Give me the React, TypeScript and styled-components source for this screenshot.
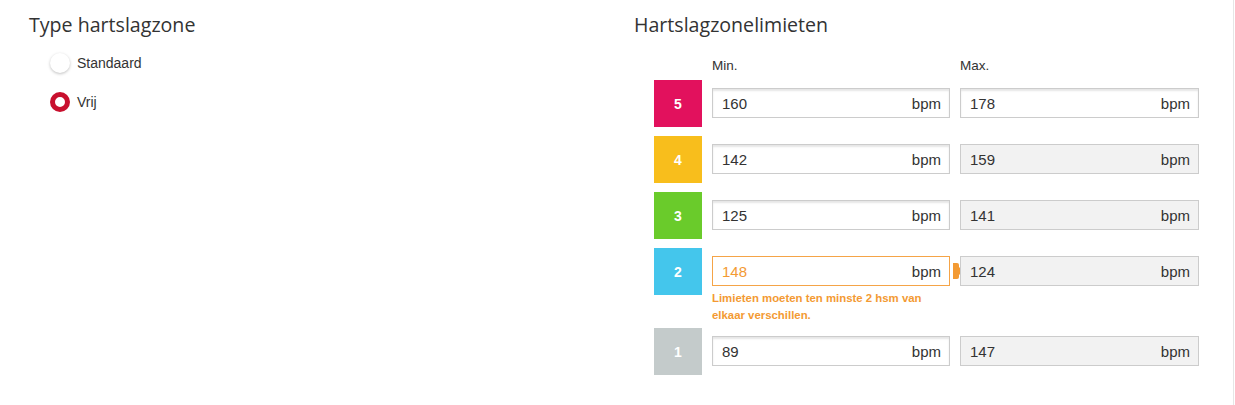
import styled, { createGlobalStyle } from "styled-components";

type Zone = {
    level: number;
    color: string;
    min: number;
    max: number;
    maxEditable?: boolean;
    error?: string;
}

const zones: Array<Zone> = [
    { level: 5, color: "#e2115d", min: 160, max: 178, maxEditable: true },
    { level: 4, color: "#f8be1c", min: 142, max: 159 },
    { level: 3, color: "#6acb2b", min: 125, max: 141 },
    { level: 2, color: "#44c6ec", min: 148, max: 124, error: "Limieten moeten ten minste 2 hsm van elkaar verschillen." },
    { level: 1, color: "#c4cbcb", min: 89, max: 147 },
]

const GlobalStyle = createGlobalStyle`
    body {
        margin: 0;
        background: #ffffff;
        font-family: Arial, "Liberation Sans", sans-serif;
        color: #333333;
    }
`

const App = () => {
    return (
        <Page>
            <GlobalStyle />
            <TypeSection>
                <SectionTitle>Type hartslagzone</SectionTitle>
                <RadioList>
                    <RadioRow>
                        <RadioCircle />
                        <RadioLabel>Standaard</RadioLabel>
                    </RadioRow>
                    <RadioRow>
                        <RadioCircle checked />
                        <RadioLabel>Vrij</RadioLabel>
                    </RadioRow>
                </RadioList>
            </TypeSection>
            <LimitsSection>
                <SectionTitle>Hartslagzonelimieten</SectionTitle>
                <ZoneTable>
                    <HeaderRow>
                        <span />
                        <ColumnLabel>Min.</ColumnLabel>
                        <ColumnLabel>Max.</ColumnLabel>
                    </HeaderRow>
                    {zones.map((zone) => (
                        <ZoneRow key={zone.level}>
                            <ZoneBadge color={zone.color}>{zone.level}</ZoneBadge>
                            <FieldCell>
                                <BpmField invalid={!!zone.error}>
                                    <FieldValue invalid={!!zone.error}>{zone.min}</FieldValue>
                                    <FieldUnit>bpm</FieldUnit>
                                </BpmField>
                                {zone.error ? <ErrorText>{zone.error}</ErrorText> : null}
                            </FieldCell>
                            <FieldCell>
                                <BpmField disabled={!zone.maxEditable}>
                                    <FieldValue>{zone.max}</FieldValue>
                                    <FieldUnit>bpm</FieldUnit>
                                </BpmField>
                            </FieldCell>
                        </ZoneRow>
                    ))}
                </ZoneTable>
            </LimitsSection>
        </Page>
    )
}

export default App;

const Page = styled.div`
    display: flex;
    flex-direction: row;
    width: 1233px;
    height: 405px;
    border-right: 1px solid #e6e6e6;
    box-sizing: content-box;
`

const TypeSection = styled.div`
    width: 634px;
    padding-left: 29px;
    box-sizing: border-box;
`

const LimitsSection = styled.div`
    flex: 1;
`

const SectionTitle = styled.h2`
    margin: 0;
    padding-top: 12px;
    font-family: "Open Sans", sans-serif;
    font-weight: 400;
    font-size: 19.6px;
    line-height: 26px;
    color: #333333;
`

const RadioList = styled.div`
    display: flex;
    flex-direction: column;
    gap: 19px;
    padding-top: 15px;
    padding-left: 21px;
`

const RadioRow = styled.label`
    display: flex;
    align-items: center;
    gap: 7px;
    height: 20px;
`

const RadioCircle = styled.span<{ checked?: boolean }>`
    width: 20px;
    height: 20px;
    border-radius: 50%;
    box-sizing: border-box;
    background: #ffffff;
    border: ${(p) => (p.checked ? "5px solid #c8102e" : "none")};
    box-shadow: ${(p) => (p.checked ? "none" : "0 1px 3px rgba(0, 0, 0, 0.25)")};
`

const RadioLabel = styled.span`
    font-size: 14px;
    color: #333333;
`

const ZoneTable = styled.div`
    display: flex;
    flex-direction: column;
    padding-left: 20px;
    padding-top: 20px;
`

const HeaderRow = styled.div`
    display: grid;
    grid-template-columns: 48px 238px 239px;
    column-gap: 10px;
    height: 22px;
`

const ColumnLabel = styled.span`
    font-size: 13.5px;
    line-height: 16px;
    color: #333333;
`

const ZoneRow = styled.div`
    display: grid;
    grid-template-columns: 48px 238px 239px;
    column-gap: 10px;
    align-items: start;
    padding-bottom: 9px;
`

const ZoneBadge = styled.div<{ color: string }>`
    width: 48px;
    height: 47px;
    background: ${(p) => p.color};
    color: #ffffff;
    font-weight: bold;
    font-size: 14px;
    display: flex;
    align-items: center;
    justify-content: center;
`

const FieldCell = styled.div`
    display: flex;
    flex-direction: column;
    padding-top: 8px;
`

const BpmField = styled.div<{ invalid?: boolean; disabled?: boolean }>`
    position: relative;
    height: 30px;
    box-sizing: border-box;
    display: flex;
    align-items: center;
    justify-content: space-between;
    padding: 0 8px 0 9px;
    border: 1px solid ${(p) => (p.invalid ? "#f5a447" : "#cccccc")};
    background: ${(p) => (p.disabled ? "#f2f2f2" : "#ffffff")};
    box-shadow: ${(p) => (p.invalid || p.disabled ? "none" : "inset 0 2px 2px rgba(0, 0, 0, 0.1)")};

    ${(p) => p.invalid && `
        &::after {
            content: "";
            position: absolute;
            right: -10px;
            top: 6px;
            width: 6px;
            height: 16px;
            background: #f39a33;
            border-radius: 0 2px 2px 0;
        }
        &::before {
            content: "";
            position: absolute;
            right: -11px;
            top: 10px;
            border-top: 4px solid transparent;
            border-bottom: 4px solid transparent;
            border-right: 4px solid #f39a33;
        }
    `}
`

const FieldValue = styled.span<{ invalid?: boolean }>`
    font-size: 15px;
    color: ${(p) => (p.invalid ? "#f39a33" : "#333333")};
`

const FieldUnit = styled.span`
    font-size: 15px;
    color: #333333;
`

const ErrorText = styled.div`
    margin-top: 4px;
    margin-bottom: -5px;
    font-size: 11.4px;
    font-weight: bold;
    line-height: 17px;
    color: #f39a33;
`
